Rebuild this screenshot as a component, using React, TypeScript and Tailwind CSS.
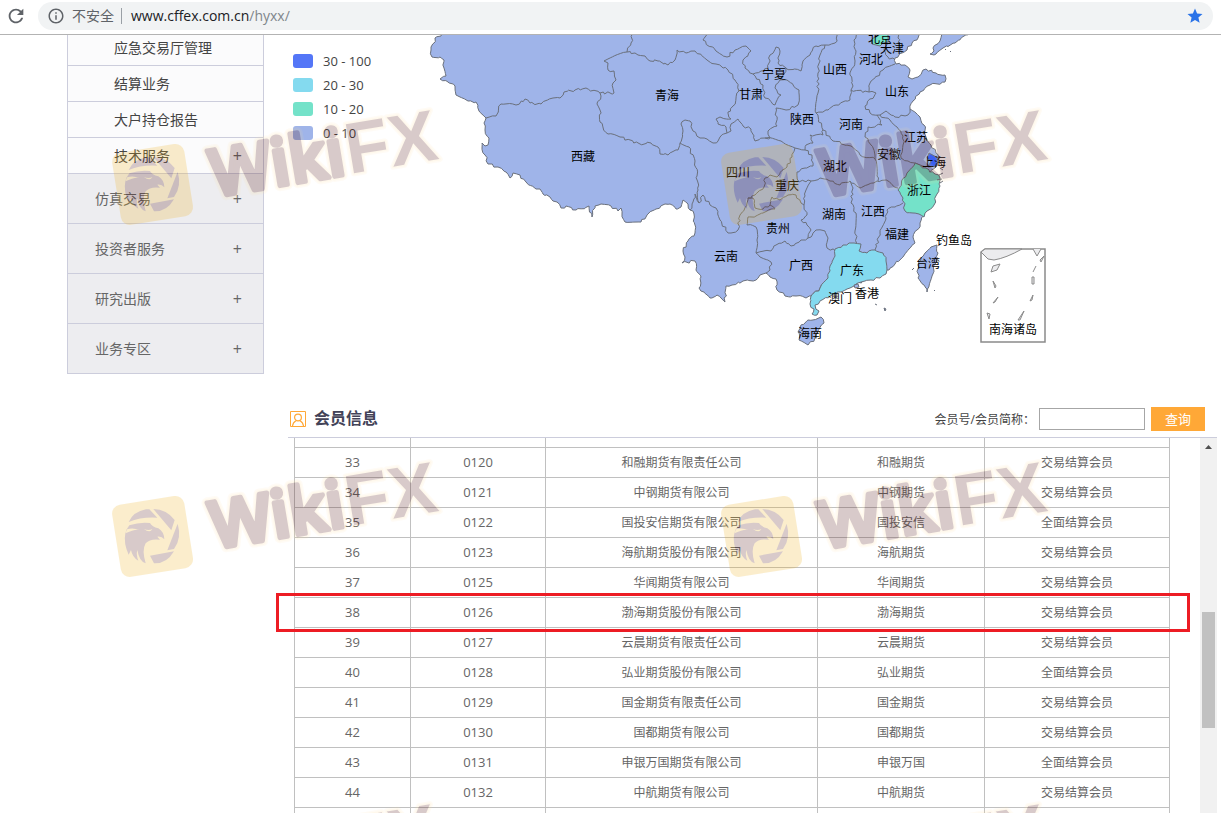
// src/App.tsx
import React, { useState } from "react";
import { MdInfoOutline, MdRefresh, MdStar } from "react-icons/md";

const subMenu = [
  { label: "应急交易厅管理", more: false },
  { label: "结算业务", more: false },
  { label: "大户持仓报告", more: false },
  { label: "技术服务", more: true },
];

const mainMenu = ["仿真交易", "投资者服务", "研究出版", "业务专区"];

const legend = [
  { label: "30 - 100", color: "bg-[#5476f7]" },
  { label: "20 - 30", color: "bg-[#84daef]" },
  { label: "10 - 20", color: "bg-[#74e2c9]" },
  { label: "0 - 10", color: "bg-[#9fb4e9]" },
];

const members = [
  ["33", "0120", "和融期货有限责任公司", "和融期货", "交易结算会员"],
  ["34", "0121", "中钢期货有限公司", "中钢期货", "交易结算会员"],
  ["35", "0122", "国投安信期货有限公司", "国投安信", "全面结算会员"],
  ["36", "0123", "海航期货股份有限公司", "海航期货", "交易结算会员"],
  ["37", "0125", "华闻期货有限公司", "华闻期货", "交易结算会员"],
  ["38", "0126", "渤海期货股份有限公司", "渤海期货", "交易结算会员"],
  ["39", "0127", "云晨期货有限责任公司", "云晨期货", "交易结算会员"],
  ["40", "0128", "弘业期货股份有限公司", "弘业期货", "全面结算会员"],
  ["41", "0129", "国金期货有限责任公司", "国金期货", "交易结算会员"],
  ["42", "0130", "国都期货有限公司", "国都期货", "交易结算会员"],
  ["43", "0131", "申银万国期货有限公司", "申银万国", "全面结算会员"],
  ["44", "0132", "中航期货有限公司", "中航期货", "交易结算会员"],
];

// Outlines are flat "x y x y" lists, the small wiggle is added by rough()
const mainland =
  "442 30 441 36 435 38 434 43 431 47 431 50 432 57 440 57 444 60 444 68 446 76 440 79 448 82 455 86 456 95 460 97 468 101 476 102 479 111 486 118 484 123 485 130 489 138 488 145 485 146 482 143 482 148 485 155 488 164 498 167 506 172 510 178 513 173 520 175 526 182 536 189 540 189 543 194 550 197 553 201 557 202 561 208 566 206 576 210 589 206 592 217 595 206 601 204 611 206 618 211 621 208 622 214 625 222 641 222 648 214 656 209 665 204 670 204 676 209 681 207 683 200 688 204 690 210 694 214 695 233 688 241 683 251 685 257 682 263 695 261 696 270 701 277 699 288 710 298 717 295 721 298 725 302 726 286 732 285 743 281 756 280 760 275 766 273 770 277 776 279 777 290 785 296 796 296 806 298 811 296 820 288 828 278 850 287 887 270 889 270 895 264 903 257 909 249 915 243 913 237 917 230 920 223 924 216 930 173 936 167 939 161 936 153 931 145 926 137 924 125 920 117 910 109 913 101 920 92 930 85 945 82 945 75 936 73 926 69 918 77 912 79 908 77 910 70 905 65 896 64 895 58 902 53 907 50 912 43 918 38 924 30";

const guangdong =
  "835 249 843 245 851 243 861 244 859 251 867 253 875 250 883 253 886 261 887 270 886 274 880 278 871 280 858 283 854 286 850 288 841 292 830 296 822 300 815 305 819 311 817 315 812 314 814 309 810 304 811 296 820 288 828 278 830 266 835 256";

const zhejiang =
  "915 163 907 173 898 190 903 198 905 211 913 213 919 214 924 217 927 211 934 205 937 194 940 186 940 178 935 174 926 168";

const borders = [
  "486 118 496 116 501 104 516 105 525 99 530 103 541 104 553 98 560 98 564 92 575 90 586 88 600 93 614 93 613 83 616 80 614 71 608 70 608 63 604 61 627 52 631 43 633 30",
  "627 52 635 53 638 55 645 56 650 61 658 61 668 65 675 60 677 50 686 53 695 51 707 60 716 64 728 70 735 80 739 91 733 106 728 112 731 119 720 117 716 119 718 124 726 127 727 133 720 137 718 141 713 143 707 139 700 138 693 131 690 121 685 120 681 124 683 131 680 143 678 150 672 152 668 155 660 154 658 147 651 143 640 144 620 137 608 134 600 122 600 110 597 104 601 96 600 93",
  "680 143 689 147 695 161 697 176 698 190 699 203 703 195 710 205 716 208 720 220 728 233 738 230 740 215 747 203 748 198 753 198 755 208 763 209 770 205 775 209 763 213 756 216 748 217 747 225 756 227 757 240 756 253 760 257 771 262 770 270 766 273",
  "699 203 695 194 693 202 690 210",
  "756 253 771 251 776 245 785 241 791 246 801 240 808 238 816 230 825 231 828 238 827 248 835 251",
  "808 238 811 230 807 225 801 220 807 215 804 205 805 196 806 190 811 181 820 178 830 181 840 185 850 181 853 188 851 203 856 213 855 231 857 244",
  "748 198 755 195 764 187 765 178 770 175 777 177 787 167 792 157 795 148",
  "770 205 772 197 780 200 788 195 796 195 801 203 804 205",
  "795 148 805 150 812 155 813 166 805 168 797 172 799 182 808 180 811 181",
  "727 133 731 131 731 124 738 119 743 126 751 129 755 141 765 138 781 141 795 148",
  "765 138 770 138 768 131 777 126 776 108 786 110 798 105 799 90 787 80 780 80 775 88 781 95 775 105 765 98 763 85 753 74",
  "710 30 703 40 716 51 727 57 735 50 746 46 751 51 743 60 745 68 753 74 761 71 768 68 770 55 776 47 780 51 778 63 786 68 801 71 803 61 810 55 816 46 825 45 835 43 840 30",
  "825 45 820 55 818 73 818 93 816 113 828 110 836 105 850 100 851 90 853 86 850 75 855 61 856 51 854 40 858 30",
  "786 68 784 74 780 80",
  "851 90 869 92 870 83 883 70 895 64",
  "869 92 876 93 865 106 870 113 880 115 886 111 895 117 908 115 910 109",
  "877 115 882 125 868 127 865 137 871 145 875 155 875 159 877 176 878 181",
  "816 113 823 130 833 141 851 146 860 155 875 159",
  "823 130 823 135 810 135 813 143 806 145 805 150",
  "850 181 860 188 867 185 877 181 888 181 898 188",
  "880 115 890 120 897 127 903 136 903 145 901 158 908 161 915 163 926 167",
  "903 203 895 207 887 210 886 218 880 233 875 250",
  "888 42 884 50 888 57 895 60",
  "903 30 898 38 900 46 902 53",
];

const islands = [
  "970 32 955 43 943 48 934 55 930 54 934 51 933 48 940 41 945 30",
  "800 327 808 320 821 317 824 323 815 338 808 345 799 340 798 332",
  "931 247 937 245 938 253 932 276 927 292 924 285 918 278 918 265 925 253",
];

const places: [string, number, number][] = [
  ["青海", 667, 95],
  ["西藏", 583, 156],
  ["甘肃", 751, 94],
  ["宁夏", 774, 74],
  ["陕西", 802, 119],
  ["山西", 835, 69],
  ["河北", 871, 59],
  ["北京", 880, 38],
  ["天津", 892, 48],
  ["山东", 897, 91],
  ["河南", 851, 124],
  ["江苏", 916, 137],
  ["安徽", 889, 154],
  ["上海", 934, 162],
  ["湖北", 835, 166],
  ["浙江", 919, 190],
  ["四川", 738, 172],
  ["重庆", 787, 185],
  ["湖南", 834, 214],
  ["江西", 873, 211],
  ["贵州", 778, 228],
  ["云南", 726, 256],
  ["广西", 801, 265],
  ["福建", 897, 234],
  ["广东", 852, 270],
  ["澳门", 840, 298],
  ["香港", 867, 293],
  ["海南", 810, 333],
  ["台湾", 928, 263],
  ["钓鱼岛", 954, 240],
  ["南海诸岛", 1013, 329],
];

// Splits every edge and shifts the middle points. The shift depends only on
// the position, so edges shared by two regions stay together.
const rough = (list: string, closed = false) => {
  const n = list.split(" ").map(Number);
  const pts: number[][] = [];
  for (let i = 0; i < n.length; i += 2) pts.push([n[i], n[i + 1]]);
  if (closed) pts.push(pts[0]);
  const out = [pts[0].join(" ")];
  for (let i = 1; i < pts.length; i++) {
    const [ax, ay] = pts[i - 1];
    const [bx, by] = pts[i];
    const steps = Math.max(1, Math.round(Math.hypot(bx - ax, by - ay) / 3));
    for (let s = 1; s <= steps; s++) {
      const x = ax + ((bx - ax) * s) / steps;
      const y = ay + ((by - ay) * s) / steps;
      const k = s === steps ? 0 : 1.1;
      out.push(
        `${(x + Math.sin(x * 12.9 + y * 78.2) * k).toFixed(1)} ${(y + Math.sin(x * 39.3 + y * 11.1) * k).toFixed(1)}`
      );
    }
  }
  return "M" + out.join("L") + (closed ? "Z" : "");
};

const ChinaMap: React.FC = () => (
  <svg
    className="h-[315px] w-[630px] shrink-0"
    viewBox="420 35 630 315"
    role="img"
    aria-label="会员分布"
  >
    <g stroke="#6a707c" strokeWidth="1" strokeLinejoin="round" fill="#9fb4e9">
      <path d={rough(mainland, true)} />
      {islands.map((d) => (
        <path key={d} d={rough(d, true)} />
      ))}
      {borders.map((d) => (
        <path key={d} d={rough(d)} fill="none" />
      ))}
      <path d={rough(guangdong, true)} fill="#84daef" />
      <path d={rough(zhejiang, true)} fill="#74e2c9" />
      <path d="M871 40 876 36 879 30H888V42L883 43 880 46 872 44Z" fill="#74e2c9" />
      <path d="M929 153 938 158 937 166 928 167 931 161 927 158Z" fill="#3a5ff0" />
      <path d="M854 285l4-1 1 3-4 1z" />
      <path d="M939 175l4-2M937 180l5-1M940 168l3 2M945 49l1 1M950 51l1 1M875 304l2 1M884 308l2 1-1 2zM934 290l1 1M914 268l-2 2M940 183l3-2" />
    </g>
    <g fill="none" stroke="#8b8b8b">
      <path d="M981 252 985 249H1045V342H981Z" strokeWidth="1.5" />
      <path
        d="M981 252 985 249H1022Q1006 258 994 260L988 259ZM1033 249 1037 256 1041 249M993 266 1000 264 997 270 991 272ZM1044 256 1041 262 1040 260ZM1036 266 1033 272M993 281 995 288 996 286ZM1032 277H1034V284H1032ZM998 297 993 303 995 302ZM1033 295 1030 301 1032 300ZM987 313 989 319 990 314ZM1024 311 1018 320 1020 320Z"
        fill="#ececee"
      />
    </g>
    <g
      fill="#000"
      fontSize="12"
      textAnchor="middle"
      fontFamily="'Noto Sans CJK SC', sans-serif"
    >
      {places.map(([name, x, y]) => (
        <text key={name} x={x} y={y + 5}>
          {name}
        </text>
      ))}
    </g>
  </svg>
);

const Watermark: React.FC<{ className: string }> = ({ className }) => (
  <svg
    className={`pointer-events-none absolute h-[130px] w-[350px] ${className}`}
    viewBox="0 0 350 130"
    aria-hidden="true"
  >
    <g opacity="0.22">
      <rect x="16" y="50" width="73" height="73" rx="9" fill="#eeb21e" transform="rotate(-9 52 86)" />
      <g transform="scale(.3333)" fill="#521313">
        {/* shutter ring */}
        <path d="M86 216Q100 185 138 178L148 178 172 203Q125 200 86 216Z" />
        <path d="M160 177Q200 178 224 210L214 241Z" />
        <path d="M233 221Q246 265 222 297L202 301Z" />
        <path d="M150 317 222 304Q200 342 162 340Z" />
        {/* eagle head */}
        <path d="M88 226Q120 215 150 219 156 231 175 235 192 245 193 268 185 258 172 260L180 269Q150 265 137 280 125 300 137 340 118 335 112 300 108 315 115 332 97 322 93 300L86 314Q70 280 76 250 80 235 88 226Z" />
        <path d="M131 236Q145 243 157 237 150 251 131 236ZM88 226Q82 236 76 250L96 242Q110 238 118 240 98 232 82 238Z" fill="#eeb21e" />
      </g>
      <g
        strokeLinejoin="round"
        strokeLinecap="round"
        transform="rotate(-9.5 130 96)"
      >
        {[
          { color: "#ffe2a0", extra: 6, opacity: 0.45 },
          { color: "#ffd98a", extra: 3, opacity: 0.5 },
          { color: "#521313", extra: 0, opacity: 1 },
        ].map(({ color, extra, opacity }) => (
          <g key={extra} fill={color} stroke={color} opacity={opacity}>
            <text x="114" y="96" fontSize="65" fontWeight="600" strokeWidth={5 + extra} fontFamily="'Open Sans', sans-serif">
              Wiki
            </text>
            <text x="251" y="96" fontSize="72" fontWeight="700" strokeWidth={extra} fontFamily="'Liberation Sans', sans-serif">
              FX
            </text>
          </g>
        ))}
      </g>
    </g>
  </svg>
);

const App: React.FC = () => {
  const [keyword, setKeyword] = useState("");

  return (
    <div className="relative flex h-screen flex-col overflow-hidden bg-white font-['Open_Sans','Noto_Sans_CJK_SC',sans-serif]">
      <header className="flex h-[35px] shrink-0 items-start border-b border-[#b3b3b3] pt-0.5">
        <button aria-label="刷新" className="flex h-7 w-[38px] items-center pl-[5px] text-[#5f6368]">
          <MdRefresh size={22} />
        </button>
        <div className="mr-2 flex h-7 flex-1 items-center rounded-full bg-[#f1f3f4] pl-[9px] pr-[9px]">
          <MdInfoOutline size={18} className="mr-[7px] text-[#5f6368]" />
          <span className="text-sm text-[#5f6368]">不安全</span>
          <span className="ml-[7px] mr-[9px] h-4 w-px bg-[#9aa0a6]" />
          <span className="flex-1 text-sm text-[#202124]">
            www.cffex.com.cn<span className="text-[#80868b]">/hyxx/</span>
          </span>
          <button aria-label="收藏" className="text-[#2a73e8]">
            <MdStar size={18} />
          </button>
        </div>
      </header>

      <div className="flex flex-1 items-start overflow-hidden">
        <nav className="ml-[67px] -mt-[5px] w-[197px] shrink-0 border-x border-[#cccddc] text-sm">
          {subMenu.map(({ label, more }) => (
            <a
              key={label}
              href="#"
              className="flex h-9 items-center justify-between border-b border-[#cccddc] bg-[#fbfbfc] pl-[46px] pr-[21px] text-[#444]"
            >
              {label}
              {more && <span className="text-base text-[#666]">+</span>}
            </a>
          ))}
          {mainMenu.map((label) => (
            <a
              key={label}
              href="#"
              className="flex h-[50px] items-center justify-between border-b border-[#cccddc] bg-[#ededf0] pl-[27px] pr-[21px] text-[#666]"
            >
              {label}
              <span className="text-base">+</span>
            </a>
          ))}
        </nav>

        <main className="ml-6 mr-1 min-w-0 flex-1">
          <div className="flex h-[365px] overflow-hidden">
            <ul className="flex w-[132px] shrink-0 flex-col gap-1 pl-[5px] pt-4 text-[13px] text-[#444]">
              {legend.map(({ label, color }) => (
                <li key={label} className="flex h-5 items-center gap-2.5">
                  <span className={`h-3.5 w-5 rounded-[3px] ${color}`} />
                  <span className="pt-0.5">{label}</span>
                </li>
              ))}
            </ul>
            <ChinaMap />
          </div>

          <div className="flex h-[38px] items-center border-b border-[#cccddc] pr-3">
            <svg className="ml-0.5 h-4 w-4" viewBox="0 0 16 16" fill="none" stroke="#ffa837">
              <path d="M.5.5h15v15H.5z" />
              <circle cx="8" cy="6.5" r="3.4" strokeWidth="1.2" />
              <path d="M2.5 15c.3-2.6 1.5-4.3 3.5-5.3M13.5 15c-.3-2.6-1.5-4.3-3.5-5.3" strokeWidth="1.2" />
            </svg>
            <h2 className="ml-2 flex-1 pb-0.5 text-base font-bold text-[#434358]">会员信息</h2>
            <label htmlFor="member" className="pt-0.5 text-xs text-[#444]">
              会员号/会员简称：
            </label>
            <input
              id="member"
              value={keyword}
              onChange={(e) => setKeyword(e.target.value)}
              className="ml-1 h-[22px] w-[106px] border border-[#a6a6a6] px-1 text-xs outline-none"
            />
            <button className="ml-1.5 h-6 w-[54px] bg-[#ffa837] pt-0.5 text-[13px] text-white">查询</button>
          </div>

          <div className="relative flex">
            <div className="min-w-0 flex-1 pl-1.5 pr-[30px]">
              <table className="w-full table-fixed border-collapse text-center text-xs text-[#666] [&_td]:border [&_td]:border-t-0 [&_td]:border-[#c0c0c0] [&_td]:pt-0.5">
                <colgroup>
                  <col className="w-[116px]" />
                  <col className="w-[135px]" />
                  <col />
                  <col className="w-[167px]" />
                  <col className="w-[185px]" />
                </colgroup>
                <tbody>
                  <tr className="h-[9px]">
                    <td /><td /><td /><td /><td />
                  </tr>
                  {members.map(([no, code, name, short, kind]) => (
                    <tr key={code} className="h-[30px]">
                      <td className="text-[13px]">{no}</td>
                      <td className="text-[13px]">{code}</td>
                      <td>{name}</td>
                      <td>{short}</td>
                      <td>{kind}</td>
                    </tr>
                  ))}
                  <tr className="h-[30px]">
                    <td /><td /><td /><td /><td />
                  </tr>
                </tbody>
              </table>
            </div>
            <div className="flex w-[17px] flex-col items-center bg-[#f1f1f1] pt-[7px]">
              <svg className="h-1 w-[7px]" viewBox="0 0 7 4" fill="#505050">
                <path d="M0 4 3.5 0 7 4z" />
              </svg>
              <div className="mt-[163px] h-[116px] w-[13px] bg-[#c1c1c1]" />
            </div>
            {/* marked row */}
            <div className="pointer-events-none absolute -left-3 right-[27px] top-[155px] h-[39px] border-[3px] border-[#ed1c24]" />
          </div>
        </main>
      </div>

      <Watermark className="left-[100px] top-[98px]" />
      <Watermark className="left-[709px] top-[98px]" />
      <Watermark className="left-[100px] top-[450px]" />
      <Watermark className="left-[709px] top-[450px]" />
      <Watermark className="left-[100px] top-[792px]" />
      <Watermark className="left-[709px] top-[792px]" />
    </div>
  );
};

export default App;
